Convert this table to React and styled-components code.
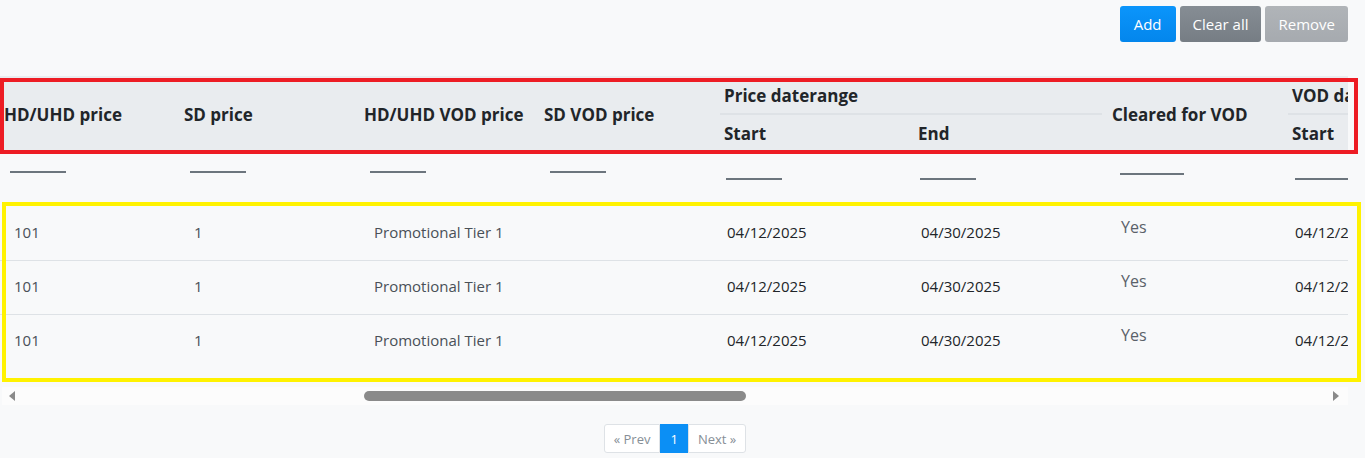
import React from 'react';
import styled, { createGlobalStyle } from 'styled-components';

const GlobalStyle = createGlobalStyle`
    body {
        margin: 0;
        background: #f8f9fa;
        font-family: "Open Sans", "Noto Sans", sans-serif;
        color: #212529;
    }
`;

const COLS = '180px 180px 180px 180px 194px 194px 180px 180px';

const rows = [
    { hd: '101', sd: '1', vod: 'Promotional Tier 1', sdVod: '', start: '04/12/2025', end: '04/30/2025', cleared: 'Yes', vodStart: '04/12/2025' },
    { hd: '101', sd: '1', vod: 'Promotional Tier 1', sdVod: '', start: '04/12/2025', end: '04/30/2025', cleared: 'Yes', vodStart: '04/12/2025' },
    { hd: '101', sd: '1', vod: 'Promotional Tier 1', sdVod: '', start: '04/12/2025', end: '04/30/2025', cleared: 'Yes', vodStart: '04/12/2025' },
];

const filters = [
    { pad: 10, top: 19, width: 56 },
    { pad: 10, top: 19, width: 56 },
    { pad: 10, top: 19, width: 56 },
    { pad: 10, top: 19, width: 56 },
    { pad: 6, top: 26, width: 56 },
    { pad: 6, top: 26, width: 56 },
    { pad: 12, top: 21, width: 64 },
    { pad: 7, top: 26, width: 56 },
];

const Arrow = ({ dir }) => (
    <svg width="8" height="10" viewBox="0 0 8 10">
        {dir === 'left'
            ? <polygon points="7,0 7,10 1,5" fill="#8a8a8a" />
            : <polygon points="1,0 1,10 7,5" fill="#8a8a8a" />}
    </svg>
);

const App = () => {
    return (
        <Page>
            <GlobalStyle />
            <Toolbar>
                <Button variant="primary">Add</Button>
                <Button variant="secondary">Clear all</Button>
                <Button variant="disabled">Remove</Button>
            </Toolbar>

            <TableArea>
                <Scroller>
                    <HeadGrid>
                        <HeadCell span>HD/UHD price</HeadCell>
                        <HeadCell span>SD price</HeadCell>
                        <HeadCell span>HD/UHD VOD price</HeadCell>
                        <HeadCell span>SD VOD price</HeadCell>
                        <GroupCell cols={2}>Price daterange</GroupCell>
                        <HeadCell span>Cleared for VOD</HeadCell>
                        <GroupCell cols={1}>VOD daterange</GroupCell>
                        <SubCell>Start</SubCell>
                        <SubCell>End</SubCell>
                        <SubCell>Start</SubCell>
                    </HeadGrid>

                    <FilterRow>
                        {filters.map((f, i) => (
                            <FilterCell key={i} pad={f.pad} top={f.top}>
                                <FilterLine w={f.width} />
                            </FilterCell>
                        ))}
                    </FilterRow>

                    <Body>
                        {rows.map((r, i) => (
                            <Row key={i} last={i === rows.length - 1}>
                                <Cell>{r.hd}</Cell>
                                <Cell>{r.sd}</Cell>
                                <Cell>{r.vod}</Cell>
                                <Cell>{r.sdVod}</Cell>
                                <DateCell>{r.start}</DateCell>
                                <DateCell>{r.end}</DateCell>
                                <YesCell>{r.cleared}</YesCell>
                                <DateCell>{r.vodStart}</DateCell>
                            </Row>
                        ))}
                    </Body>
                </Scroller>

                <ScrollTrack>
                    <Arrow dir="left" />
                    <Thumb />
                    <Arrow dir="right" />
                </ScrollTrack>

                <Highlight color="#ed1c24" top={78} left={0} width={1358} height={76} />
                <Highlight color="#fff200" top={202} left={2} width={1359} height={180} />
            </TableArea>

            <Pager>
                <PageLink>« Prev</PageLink>
                <PageLink active>1</PageLink>
                <PageLink>Next »</PageLink>
            </Pager>
        </Page>
    );
};

const Page = styled.div`
    width: 1348px;
    padding-top: 6px;
`;

const Toolbar = styled.div`
    display: flex;
    justify-content: flex-end;
    gap: 4px;
    margin-bottom: 34px;
`;

const Button = styled.button`
    height: 36px;
    padding: 0 ${p => p.variant === 'primary' ? '14px' : '13px'};
    border: none;
    border-radius: 3px;
    font-family: "Open Sans", "Noto Sans", sans-serif;
    font-size: 15px;
    color: #fff;
    cursor: pointer;
    background: ${p => p.variant === 'primary'
        ? 'linear-gradient(#0b95fb, #0386ec)'
        : p.variant === 'secondary'
            ? 'linear-gradient(#868d94, #767d84)'
            : 'linear-gradient(#b0b4b8, #a6aaaf)'};
    &:focus { outline: none; }
`;

const TableArea = styled.div`
    position: relative;
`;

const Scroller = styled.div`
    overflow: hidden;
    width: 1348px;
`;

const HeadGrid = styled.div`
    display: grid;
    grid-template-columns: ${COLS};
    grid-template-rows: 39px 36px;
    background: #e9ecef;
    border-bottom: 2px solid #dee2e6;
    width: max-content;
    font-weight: 700;
    font-size: 17px;
    color: #212529;
`;

const HeadCell = styled.div`
    grid-row: span 2;
    display: flex;
    align-items: center;
    padding: 2px 0 0 4px;
    white-space: nowrap;
`;

const GroupCell = styled.div`
    grid-column: span ${p => p.cols};
    display: flex;
    align-items: center;
    padding: 2px 0 0 4px;
    margin-right: 6px;
    border-bottom: 2px solid #dee2e6;
    white-space: nowrap;
`;

const SubCell = styled.div`
    display: flex;
    align-items: center;
    padding-left: 4px;
`;

const FilterRow = styled.div`
    display: grid;
    grid-template-columns: ${COLS};
    height: 54px;
    width: max-content;
`;

const FilterCell = styled.div`
    padding: ${p => p.top - 1}px 0 0 ${p => p.pad}px;
`;

const FilterLine = styled.div`
    width: ${p => p.w}px;
    height: 2px;
    background: #6c757d;
`;

const Body = styled.div`
    padding-bottom: 11px;
    width: max-content;
`;

const Row = styled.div`
    display: grid;
    grid-template-columns: ${COLS};
    height: 54px;
    border-bottom: ${p => p.last ? 'none' : '1px solid #dee2e6'};
    box-sizing: border-box;
`;

const Cell = styled.div`
    display: flex;
    align-items: center;
    padding: 0 0 4px 14px;
    font-size: 15px;
    color: #495057;
    white-space: nowrap;
`;

const DateCell = styled(Cell)`
    padding-left: 7px;
    color: #212529;
`;

const YesCell = styled(Cell)`
    align-items: flex-start;
    padding-top: 9px;
    padding-left: 13px;
    font-size: 16px;
    color: #5a6169;
`;

const ScrollTrack = styled.div`
    display: flex;
    align-items: center;
    margin: 7px 0 0 2px;
    height: 18px;
    padding: 0 8px 0 6px;
    background: #fcfcfc;
`;

const Thumb = styled.div`
    height: 10px;
    width: 382px;
    margin-left: 348px;
    margin-right: auto;
    border-radius: 5px;
    background: #8a8a8a;
`;

const Highlight = styled.div`
    position: absolute;
    top: ${p => p.top - 76}px;
    left: ${p => p.left}px;
    width: ${p => p.width}px;
    height: ${p => p.height}px;
    box-sizing: border-box;
    border: 4px solid ${p => p.color};
    pointer-events: none;
`;

const Pager = styled.div`
    display: flex;
    justify-content: center;
    margin: 19px 0 0 2px;
`;

const PageLink = styled.div`
    height: 29px;
    box-sizing: border-box;
    display: flex;
    align-items: center;
    padding: 0 9px;
    font-size: 13px;
    color: ${p => p.active ? '#fff' : '#868e96'};
    background: ${p => p.active ? '#0b8ff5' : '#fff'};
    border: 1px solid ${p => p.active ? '#0b8ff5' : '#dee2e6'};
    &:first-child { border-radius: 3px 0 0 3px; }
    &:last-child { border-radius: 0 3px 3px 0; }
`;

export default App;
